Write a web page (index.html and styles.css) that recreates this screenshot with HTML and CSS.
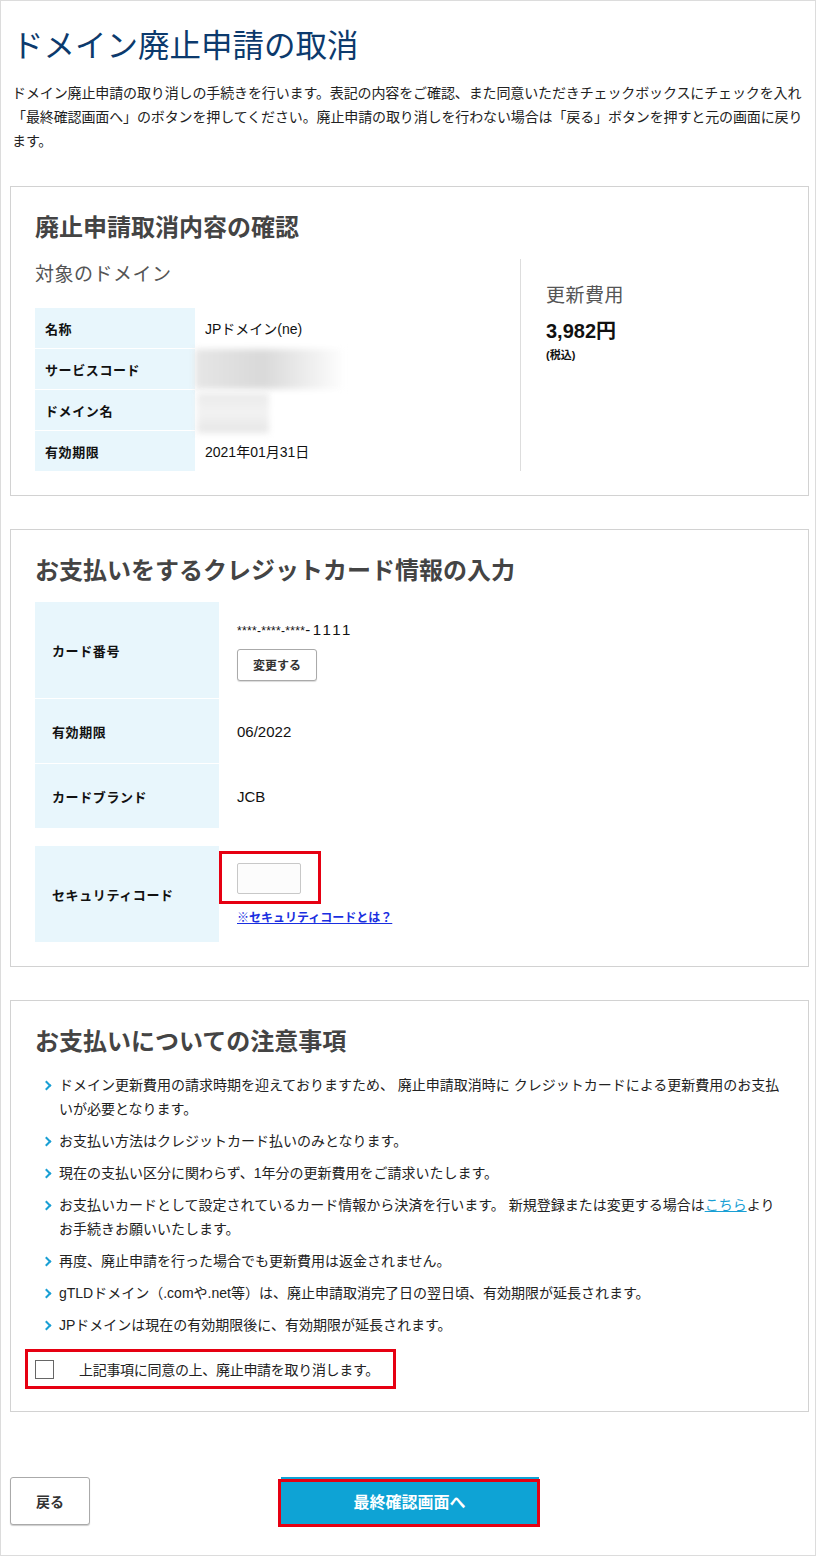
FILE: index.html
```html
<!DOCTYPE html>
<html lang="ja">
<head>
    <meta charset="UTF-8">
    <meta name="viewport" content="width=device-width, initial-scale=1.0">
    <title>ドメイン廃止申請の取消</title>
    <link rel="stylesheet" href="styles.css">
</head>
<body>

<div class="page">
    <h1 class="page-title">ドメイン廃止申請の取消</h1>
    <p class="lead">ドメイン廃止申請の取り消しの手続きを行います。表記の内容をご確認、また同意いただきチェックボックスにチェックを入れ「最終確認画面へ」のボタンを押してください。廃止申請の取り消しを行わない場合は「戻る」ボタンを押すと元の画面に戻ります。</p>

    <!-- 廃止申請取消内容の確認 -->
    <section class="panel">
        <h2 class="panel-title">廃止申請取消内容の確認</h2>
        <div class="summary">
            <div class="summary-main">
                <h3 class="sub-title">対象のドメイン</h3>
                <dl class="spec">
                    <dt>名称</dt>
                    <dd>JPドメイン(ne)</dd>
                    <dt>サービスコード</dt>
                    <dd><span class="masked masked-code"></span></dd>
                    <dt>ドメイン名</dt>
                    <dd><span class="masked masked-domain"></span></dd>
                    <dt>有効期限</dt>
                    <dd>2021年01月31日</dd>
                </dl>
            </div>
            <div class="summary-price">
                <h3 class="sub-title">更新費用</h3>
                <p class="price">3,982円</p>
                <p class="tax">(税込)</p>
            </div>
        </div>
    </section>

    <!-- クレジットカード情報 -->
    <section class="panel">
        <h2 class="panel-title">お支払いをするクレジットカード情報の入力</h2>
        <dl class="card-spec">
            <dt class="tall">カード番号</dt>
            <dd class="tall">
                <span class="card-no">****-****-****<span class="card-last">-1111</span></span>
                <button class="btn-small" type="button">変更する</button>
            </dd>
            <dt>有効期限</dt>
            <dd class="val">06/2022</dd>
            <dt>カードブランド</dt>
            <dd class="val">JCB</dd>
        </dl>
        <dl class="card-spec security">
            <dt class="tall">セキュリティコード</dt>
            <dd class="tall">
                <span class="marked marked-input"><input class="code-input" type="text"></span>
                <a class="help-link" href="#">※セキュリティコードとは？</a>
            </dd>
        </dl>
    </section>

    <!-- 注意事項 -->
    <section class="panel panel-notes">
        <h2 class="panel-title">お支払いについての注意事項</h2>
        <ul class="notes">
            <li>ドメイン更新費用の請求時期を迎えておりますため、 廃止申請取消時に クレジットカードによる更新費用のお支払いが必要となります。</li>
            <li>お支払い方法はクレジットカード払いのみとなります。</li>
            <li>現在の支払い区分に関わらず、1年分の更新費用をご請求いたします。</li>
            <li>お支払いカードとして設定されているカード情報から決済を行います。 新規登録または変更する場合は<a href="#" class="inline-link">こちら</a>よりお手続きお願いいたします。</li>
            <li>再度、廃止申請を行った場合でも更新費用は返金されません。</li>
            <li>gTLDドメイン（.comや.net等）は、廃止申請取消完了日の翌日頃、有効期限が延長されます。</li>
            <li>JPドメインは現在の有効期限後に、有効期限が延長されます。</li>
        </ul>
        <label class="agree">
            <input type="checkbox" class="agree-check">
            <span>上記事項に同意の上、廃止申請を取り消します。</span>
        </label>
    </section>

    <div class="actions">
        <button class="btn-back" type="button">戻る</button>
        <span class="marked marked-next"><button class="btn-next" type="button">最終確認画面へ</button></span>
    </div>
</div>

</body>
</html>
```

FILE: styles.css
```css
* {
    box-sizing: border-box;
}

body {
    margin: 0;
    font-family: "Liberation Sans", "Noto Sans CJK JP", sans-serif;
    font-size: 14px;
    color: #222;
    background-color: #fff;
}

.page {
    width: 816px;
    min-height: 1556px;
    border: 1px solid #dcdcdc;
    padding: 0 6px 0 9px;
}

.page-title {
    margin: 25px 0 15px 2px;
    font-size: 31.5px;
    line-height: 40px;
    font-weight: normal;
    color: #0c3a6d;
}

.lead {
    margin: 0 0 33px 2px;
    line-height: 24px;
    letter-spacing: -0.12px;
}

.panel {
    border: 1px solid #d2d2d2;
    padding: 25px 24px 24px;
    margin-bottom: 33px;
}

.panel-title {
    margin: 0 0 15px;
    font-size: 24px;
    line-height: 32px;
    color: #444;
}

.sub-title {
    margin: 0;
    font-size: 19px;
    line-height: 32px;
    letter-spacing: 0.5px;
    font-weight: normal;
    color: #555;
}

/* 内容の確認 */
.summary {
    display: flex;
}

.summary-main {
    width: 486px;
    border-right: 1px solid #ddd;
}

.summary-main .sub-title {
    margin-bottom: 17px;
}

.summary-price {
    flex: 1;
    padding: 21px 0 0 25px;
}

.price {
    margin: 6px 0 0;
    font-size: 20px;
    font-weight: bold;
    line-height: 26px;
    color: #111;
}

.tax {
    margin: 2px 0 0;
    font-size: 11px;
    font-weight: bold;
    color: #111;
}

.spec {
    display: grid;
    grid-template-columns: 160px 1fr;
    row-gap: 1px;
    margin: 0 24px 0 0;
}

.spec dt, .spec dd {
    margin: 0;
    height: 40px;
    display: flex;
    align-items: center;
}

.spec dt {
    background-color: #e8f6fc;
    padding-left: 10px;
    font-size: 13px;
    font-weight: bold;
    letter-spacing: 0.6px;
    color: #111;
}

.spec dd {
    padding-left: 10px;
    color: #111;
}

.masked {
    display: block;
    filter: blur(3px);
}

.masked-code {
    width: 150px;
    height: 40px;
    margin-left: -10px;
    background: linear-gradient(90deg, #e6e6e6, #d9d9d9 45%, #f4f4f4 85%, #fff);
}

.masked-domain {
    width: 72px;
    height: 40px;
    margin: 6px 0 0 -8px;
    background: linear-gradient(180deg, #eaeaea, #f2f2f2 50%, #e6e6e6);
}

/* カード情報 */
.card-spec {
    display: grid;
    grid-template-columns: 184px 1fr;
    row-gap: 1px;
    margin: 0;
}

.card-spec dt, .card-spec dd {
    margin: 0;
    height: 64px;
}

.card-spec dt {
    display: flex;
    align-items: center;
    background-color: #e8f6fc;
    padding-left: 17px;
    font-size: 13px;
    font-weight: bold;
    letter-spacing: 0.6px;
    color: #111;
}

.card-spec dd {
    padding-left: 18px;
    display: flex;
    flex-direction: column;
    justify-content: center;
    align-items: flex-start;
    color: #111;
}

.card-spec .tall {
    height: 96px;
}

.card-spec .val {
    font-size: 15px;
}

.card-spec.security {
    margin-top: 18px;
}

.card-no {
    font-size: 12px;
    line-height: 20px;
    letter-spacing: 0.3px;
}

.card-last {
    font-size: 15px;
    letter-spacing: 2.5px;
}

.btn-small {
    margin-top: 8px;
    width: 80px;
    height: 32px;
    border: 1px solid #aaa;
    border-radius: 3px;
    background-color: #fff;
    box-shadow: 0 1px 1px rgba(0,0,0,0.15);
    font-family: inherit;
    font-size: 12px;
    font-weight: bold;
    color: #333;
}

.code-input {
    display: block;
    width: 64px;
    height: 31px;
    border: 1px solid #c8c8c8;
    border-radius: 2px;
    background-color: #fcfcfc;
}

.help-link {
    margin-top: 16px;
    font-size: 12px;
    font-weight: bold;
    line-height: 16px;
    color: #1a2fe0;
}

/* 赤枠の注記 */
.marked {
    position: relative;
    display: inline-block;
}

.marked::after {
    content: "";
    position: absolute;
    border: 3px solid #e60012;
    pointer-events: none;
}

.marked-input::after {
    top: -12px;
    left: -18px;
    right: -20px;
    bottom: -10px;
}

.marked-next::after {
    top: 2px;
    left: -3px;
    right: -1px;
    bottom: -2px;
}

/* 注意事項 */
.panel-notes {
    padding-bottom: 22px;
}

.notes {
    list-style: none;
    margin: 11px 0 0;
    padding: 0;
}

.notes li {
    position: relative;
    padding-left: 24px;
    margin-bottom: 8px;
    line-height: 24px;
    color: #222;
}

.notes li:last-child {
    margin-bottom: 0;
}

.notes li::before {
    content: "";
    position: absolute;
    left: 8px;
    top: 9px;
    width: 5px;
    height: 5px;
    border-top: 2px solid #1a9fd4;
    border-right: 2px solid #1a9fd4;
    transform: rotate(45deg);
}

.inline-link {
    color: #1a9fd4;
}

.agree {
    display: flex;
    width: fit-content;
    align-items: center;
    height: 40px;
    margin: 12px 0 0 -10px;
    padding: 0 14px 0 7px;
    border: 3px solid #e60012;
    cursor: pointer;
}

.agree-check {
    appearance: none;
    -webkit-appearance: none;
    width: 19px;
    height: 19px;
    margin: 0 25px 0 0;
    border: 1px solid #666;
    background-color: #fff;
}

.agree span {
    font-size: 14px;
    letter-spacing: -0.3px;
    color: #222;
}

/* ボタン */
.actions {
    display: grid;
    grid-template-columns: 1fr auto 1fr;
    align-items: start;
    margin-top: 65px;
}

.btn-back {
    justify-self: start;
    width: 80px;
    height: 48px;
    border: 1px solid #aaa;
    border-radius: 3px;
    background-color: #fff;
    box-shadow: 0 1px 1px rgba(0,0,0,0.2);
    font-family: inherit;
    font-size: 14px;
    font-weight: bold;
    color: #333;
}

.btn-next {
    display: block;
    width: 258px;
    height: 48px;
    border: none;
    background-color: #0ea3d5;
    font-family: inherit;
    font-size: 16px;
    font-weight: bold;
    color: #fff;
}
```
